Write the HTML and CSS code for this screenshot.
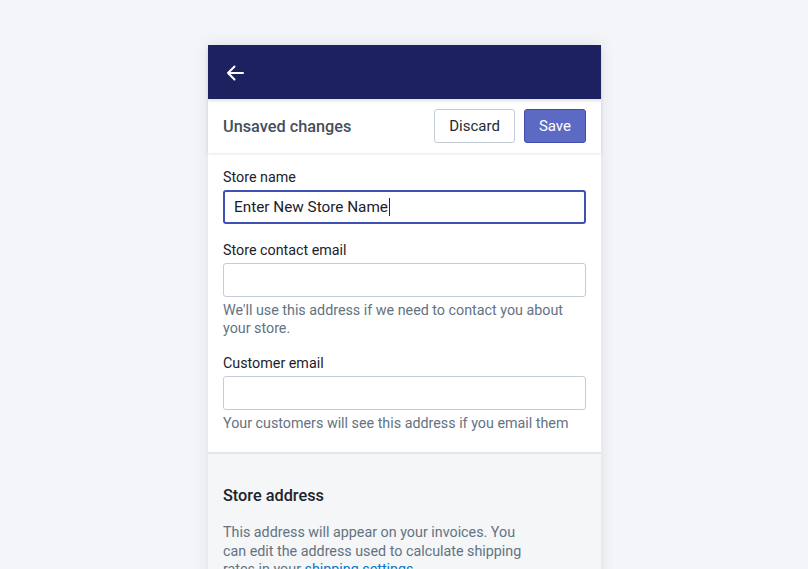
FILE: index.html
```html
<!DOCTYPE html>
<html>
<head>
<meta charset="utf-8">
<link rel="stylesheet" href="styles.css">
</head>
<body>
<div class="phone">
  <div class="topbar">
    <svg class="back" width="18" height="16" viewBox="0 0 18 16"><path d="M17 8H2M8.5 1.5L2 8l6.5 6.5" fill="none" stroke="#fff" stroke-width="2" stroke-linecap="round" stroke-linejoin="round"/></svg>
  </div>
  <div class="savebar">
    <span class="savebar-title">Unsaved changes</span>
    <div class="actions">
      <button class="btn">Discard</button>
      <button class="btn btn-primary">Save</button>
    </div>
  </div>
  <div class="form">
    <div class="field">
      <label class="label">Store name</label>
      <div class="input input-focus"><span>Enter New Store Name</span><span class="caret"></span></div>
    </div>
    <div class="field">
      <label class="label">Store contact email</label>
      <div class="input"></div>
      <p class="help">We'll use this address if we need to contact you about your store.</p>
    </div>
    <div class="field">
      <label class="label">Customer email</label>
      <div class="input"></div>
      <p class="help">Your customers will see this address if you email them</p>
    </div>
  </div>
  <div class="address">
    <h2 class="address-title">Store address</h2>
    <p class="address-text">This address will appear on your invoices. You can edit the address used to calculate shipping rates in your <a class="link">shipping settings</a>.</p>
  </div>
</div>
</body>
</html>
```
FILE: styles.css
```css
* { box-sizing: border-box; }
html, body { margin: 0; padding: 0; }
body {
  background: #f4f5f8;
  font-family: Roboto, "Noto Sans", sans-serif;
  height: 569px;
  overflow: hidden;
}
.phone {
  width: 393px;
  margin: 45px 0 0 208px;
  background: #fff;
  box-shadow: 0 0 14px rgba(30, 40, 70, 0.10);
  height: 600px;
}
.topbar {
  height: 54px;
  background: #1c2260;
  display: flex;
  align-items: center;
  padding-left: 18px;
  position: relative;
  z-index: 2;
  box-shadow: 0 2px 3px rgba(0, 0, 0, 0.12);
}
.back { display: block; margin-top: 1px; }
.savebar {
  height: 54px;
  display: flex;
  align-items: center;
  justify-content: space-between;
  padding: 0 15px;
  background: #fff;
  position: relative;
  z-index: 1;
  box-shadow: 0 1px 3px rgba(0, 0, 0, 0.10);
}
.savebar-title {
  font-size: 16.3px;
  font-weight: 500;
  color: #454f5b;
}
.actions { display: flex; gap: 9px; }
.btn {
  height: 34px;
  padding: 0 14px;
  font-family: Roboto, sans-serif;
  font-size: 15px;
  color: #212b36;
  background: #fff;
  border: 1px solid #c4cdd5;
  border-radius: 3px;
}
.btn-primary {
  background: #5c6ac4;
  border-color: #3f4eae;
  color: #fff;
}
.form {
  padding: 14px 15px 20px;
  display: flex;
  flex-direction: column;
  gap: 16px;
}
.field { display: flex; flex-direction: column; }
.label {
  font-size: 14.3px;
  line-height: 20px;
  color: #1c222b;
  margin-bottom: 3px;
}
.input {
  height: 34px;
  border: 1px solid #c4cdd5;
  border-radius: 3px;
  display: flex;
  align-items: center;
  padding-left: 10px;
  font-size: 15.3px;
  color: #1c222b;
}
.input-focus {
  border: 2px solid #4050b5;
  padding-left: 9px;
}
.caret {
  display: inline-block;
  width: 1px;
  height: 18px;
  background: #212b36;
  margin-left: 1px;
}
.help {
  margin: 4px 0 0;
  font-size: 14.3px;
  line-height: 18px;
  color: #637381;
}
.address {
  background: #f4f6f8;
  border-top: 2px solid #e3e6ea;
  padding: 32px 15px 0;
}
.address-title {
  margin: 0;
  font-size: 16.3px;
  font-weight: 500;
  line-height: 20px;
  color: #1c222b;
}
.address-text {
  margin: 17px 0 0;
  width: 305px;
  font-size: 14.3px;
  line-height: 18.5px;
  color: #637381;
}
.link { color: #007ace; }
```
